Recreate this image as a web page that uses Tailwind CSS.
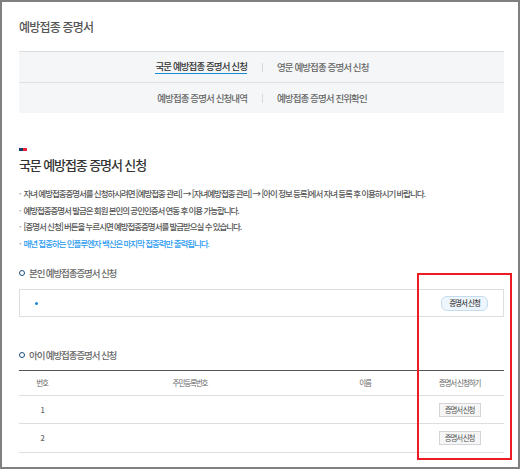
<!doctype html>
<html lang="ko">
  <head>
    <meta charset="UTF-8" />
    <title>예방접종 증명서</title>
    <script src="https://cdn.jsdelivr.net/npm/@tailwindcss/browser@4"></script>
  </head>
  <body class="bg-white font-['Noto_Sans_CJK_KR','Noto_Sans',sans-serif]">
    <main class="relative h-[469px] w-[520px] overflow-hidden border-2 border-[#808080] px-[17px] text-[#444]">
      <h1 class="pt-[16px] text-[12px] leading-[18px] font-medium tracking-[-0.8px] text-[#555]">예방접종 증명서</h1>

      <nav class="mt-[15px] w-[485px] border-t border-[#dcdcdc] bg-[#f4f6f8] text-[9.5px] font-medium tracking-[-0.9px] text-[#666]">
        <div class="grid h-[31px] grid-cols-[228px_30px_1fr] items-center border-b border-[#dfe1e3]">
          <a class="justify-self-end border-b border-[#1a8ad0] leading-[13px] text-[#333]">국문 예방접종 증명서 신청</a>
          <span class="h-[9px] w-px justify-self-center bg-[#d5d8dc]"></span>
          <a>영문 예방접종 증명서 신청</a>
        </div>
        <div class="grid h-[30px] grid-cols-[228px_30px_1fr] items-center">
          <a class="justify-self-end">예방접종 증명서 신청내역</a>
          <span class="h-[9px] w-px justify-self-center bg-[#d5d8dc]"></span>
          <a>예방접종 증명서 진위확인</a>
        </div>
      </nav>

      <div class="mt-[35px] flex h-[3px] w-[8px]">
        <span class="w-[4px] bg-[#123f6d]"></span>
        <span class="w-[4px] bg-[#e8213f]"></span>
      </div>
      <h2 class="mt-[3px] text-[13px] leading-[22px] font-medium tracking-[-1.1px] text-[#333]">국문 예방접종 증명서 신청</h2>

      <ul class="mt-[11px] flex flex-col gap-[4px] text-[8.5px] leading-[12.5px] font-medium tracking-[-1.05px] whitespace-nowrap text-[#555]">
        <li class="flex gap-[3px]"><span class="text-[#999]">·</span>자녀 예방접종증명서를 신청하시려면 [예방접종 관리] → [자녀예방접종 관리] → [아이 정보 등록]에서 자녀 등록 후 이용하시기 바랍니다.</li>
        <li class="flex gap-[3px]"><span class="text-[#999]">·</span>예방접종증명서 발급은 회원 본인의 공인인증서 연동 후 이용 가능합니다.</li>
        <li class="flex gap-[3px]"><span class="text-[#999]">·</span>[증명서 신청] 버튼을 누르시면 예방접종증명서를 발급받으실 수 있습니다.</li>
        <li class="flex gap-[3px] text-[#2a9bf0]"><span class="text-[#999]">·</span>매년 접종하는 인플루엔자 백신은 마지막 접종력만 출력됩니다.</li>
      </ul>

      <h3 class="mt-[17px] flex items-center gap-[4px] text-[9.5px] leading-[14px] font-medium tracking-[-1.1px] text-[#666]">
        <span class="size-[6px] rounded-full border border-[#1d4e7d]"></span>본인 예방접종증명서 신청
      </h3>
      <div class="mt-[9px] flex h-[28px] w-[485px] items-center justify-between border border-[#dedede] pr-[15px] pl-[15px]">
        <span class="size-[3px] rounded-full bg-[#1a8ad0]"></span>
        <button class="h-[15px] w-[47px] rounded-[6px] border border-[#c5dcef] bg-[#eef6fd] text-[7.5px] font-medium tracking-[-1px] text-[#444]">증명서 신청</button>
      </div>

      <h3 class="mt-[31px] flex items-center gap-[4px] text-[9.5px] leading-[14px] font-medium tracking-[-1.1px] text-[#666]">
        <span class="size-[6px] rounded-full border border-[#1d4e7d]"></span>아이 예방접종증명서 신청
      </h3>

      <div class="mt-[8px] w-[485px] border-t border-[#555] text-[7.5px] tracking-[-1.1px] text-[#666]">
        <div class="grid h-[25px] grid-cols-[46px_250px_100px_89px] items-center border-b border-[#dedede] text-center">
          <span>번호</span><span>주민등록번호</span><span>이름</span><span>증명서 신청하기</span>
        </div>
        <div class="grid h-[28px] grid-cols-[46px_250px_100px_89px] items-center border-b border-[#dedede] text-center">
          <span class="font-medium">1</span><span></span><span></span>
          <button class="h-[14px] w-[42px] justify-self-center border border-[#d4d4d8] bg-[#f6f6f7] tracking-[-1.2px] text-[#555]">증명서 신청</button>
        </div>
        <div class="grid h-[29px] grid-cols-[46px_250px_100px_89px] items-center border-b border-[#dedede] text-center">
          <span class="font-medium">2</span><span></span><span></span>
          <button class="h-[14px] w-[42px] justify-self-center border border-[#d4d4d8] bg-[#f6f6f7] tracking-[-1.2px] text-[#555]">증명서 신청</button>
        </div>
      </div>

      <div class="absolute top-[271px] left-[415px] h-[187px] w-[95px] border-2 border-[#ed1c24]"></div>
    </main>
  </body>
</html>
